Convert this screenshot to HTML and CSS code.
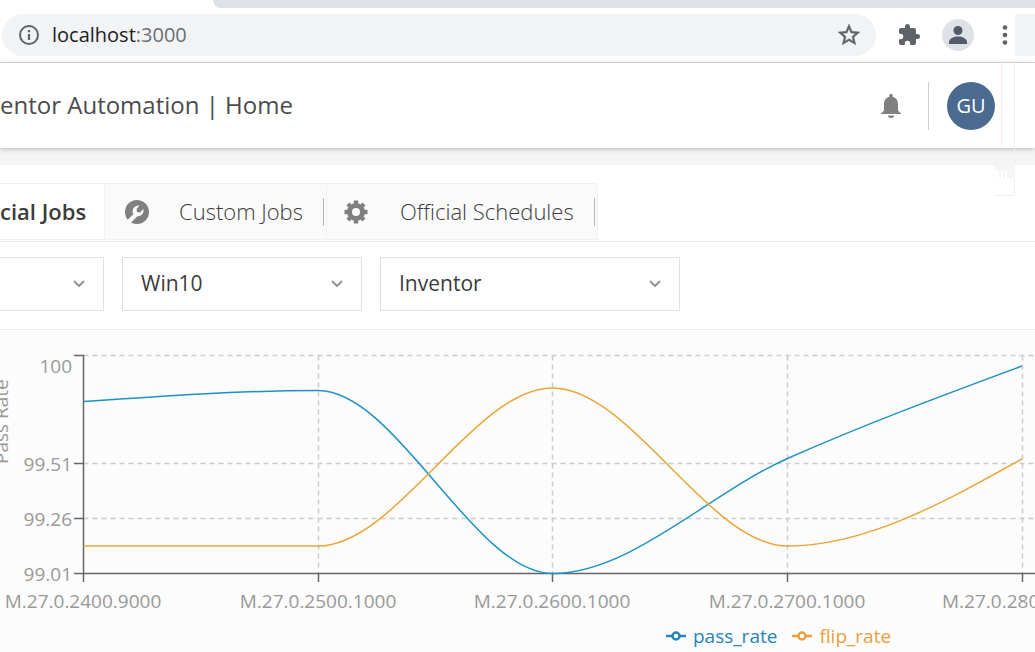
FILE: index.html
```html
<!DOCTYPE html>
<html lang="en">
<head>
<meta charset="utf-8">
<meta name="viewport" content="width=device-width, initial-scale=1">
<title>Inventor Automation | Home</title>
<link rel="stylesheet" href="styles.css">
</head>
<body>
<div class="browser">
  <div class="tab-strip"></div>
  <div class="toolbar">
    <div class="address">
      <svg class="icon-info" viewBox="0 0 22 22" aria-hidden="true"><circle cx="11" cy="11" r="9" fill="none" stroke="#5f6368" stroke-width="2"/><path d="M9.900 10h2.200v6h-2.200zM9.900 6h2.200v2.200h-2.200z" fill="#5f6368"/></svg>
      <div class="url">localhost<span class="port">:3000</span></div>
      <button class="icon-button" aria-label="Bookmark"><svg class="icon-star" viewBox="1 1 22 22"><path fill="#5f6368" stroke="#5f6368" stroke-width=".4" d="M22 9.240l-7.190-.62L12 2 9.190 8.630 2 9.240l5.460 4.730L5.820 21 12 17.270 18.180 21l-1.630-7.030L22 9.240zM12 15.400l-3.760 2.270 1-4.280-3.320-2.880 4.380-.38L12 6.100l1.710 4.040 4.380.38-3.320 2.880 1 4.280L12 15.400z"/></svg></button>
    </div>
    <button class="icon-button" aria-label="Extensions"><svg class="icon-24" viewBox="0 0 24 24"><path fill="#5f6368" d="M20.500 11H19V7a2 2 0 0 0-2-2h-4V3.500a2.500 2.500 0 0 0-5 0V5H4a2 2 0 0 0-2 2v3.800h1.500a2.700 2.700 0 0 1 0 5.400H2V20a2 2 0 0 0 2 2h3.800v-1.500a2.700 2.700 0 0 1 5.400 0V22H17a2 2 0 0 0 2-2v-4h1.500a2.500 2.500 0 0 0 0-5z"/></svg></button>
    <button class="icon-button profile" aria-label="Profile"><svg class="icon-profile" viewBox="0 0 20 20"><circle cx="10" cy="5.500" r="4.500" fill="#525b69"/><path d="M1 19v-2c0-3.500 5-5.500 9-5.500s9 2 9 5.500v2z" fill="#525b69"/></svg></button>
    <button class="icon-button" aria-label="More"><svg class="icon-more" viewBox="0 0 6 20"><g fill="#5f6368"><circle cx="3" cy="2.500" r="2.300"/><circle cx="3" cy="10" r="2.300"/><circle cx="3" cy="17.500" r="2.300"/></g></svg></button>
    <div class="address-end"></div>
  </div>
</div>
<header class="header">
  <h1 class="title">entor Automation | Home</h1>
  <button class="icon-button" aria-label="Notifications"><svg class="icon-bell" viewBox="0 0 20 24"><path fill="#808080" d="M8.300 1.500a1.700 1.700 0 0 1 3.400 0v1.300C15 3.600 17 6.500 17 10v6.500l3 3V20H0v-.5l3-3V10c0-3.500 2-6.400 5.300-7.200zM7 21.500h6a3 2.500 0 0 1-6 0z"/></svg></button>
  <div class="user"><div class="avatar">GU</div></div>
</header>
<div class="band"></div>
<svg class="edge" viewBox="0 0 24 134" aria-hidden="true"><path d="M10.500 0v84" stroke="#fae9e7"/><path d="M23.500 0v133.500H4" fill="none" stroke="#f0f0f0"/><path d="M4 103h20v13h-8v-8h-2v8h-2v-8h-2v8H8v-8H4z" fill="#f6f4f4"/></svg>
<nav class="tabs">
  <button class="tab active">cial Jobs</button>
  <button class="tab custom"><svg class="icon-24" viewBox="0 0 24 24"><circle cx="12" cy="12" r="12" fill="#808080"/><path d="M3 22.500l8-8" stroke="#fafafa" stroke-width="4.500"/><path fill="#fafafa" d="M8 13.500c-1.500-4 1.500-8.500 6.500-8l-3 3.500.5 3 3 .5 3.500-3.500c1 5-4 8.500-8 7z"/></svg><span>Custom Jobs</span></button>
  <button class="tab schedules"><svg class="icon-24" viewBox="0 0 24 24"><circle cx="12" cy="12" r="6.500" fill="none" stroke="#808080" stroke-width="5"/><g stroke="#808080" stroke-width="4.400"><path d="M12 .5v5M12 18.500v5M.5 12h5M18.500 12h5M4 4l3.500 3.500M16.500 16.500L20 20M20 4l-3.500 3.500M7.500 16.500L4 20"/></g></svg><span>Official Schedules</span></button>
</nav>
<div class="filters">
  <div class="field first"><select class="select" aria-label="Filter"><option></option></select><svg class="chevron" viewBox="0 0 12 8"><path d="M1 1l5 5 5-5"/></svg></div>
  <div class="field os"><select class="select" aria-label="Operating system"><option>Win10</option></select><svg class="chevron" viewBox="0 0 12 8"><path d="M1 1l5 5 5-5"/></svg></div>
  <div class="field product"><select class="select" aria-label="Product"><option>Inventor</option></select><svg class="chevron" viewBox="0 0 12 8"><path d="M1 1l5 5 5-5"/></svg></div>
</div>
<main class="chart-panel">
  <svg class="chart" viewBox="0 330 1035 290" role="img" aria-label="Pass rate and flip rate by build">
    <g class="grid"><path d="M83.500 355.500H1035M83.500 463.500H1035M83.500 518.500H1035M318.500 355.500V573M552.500 355.500V573M787.500 355.500V573M1022.500 355.500V573"/></g>
    <path class="axis" d="M74 355.500h9.500V582M74 463.500h9.500M74 518.500h9.500M74 573.500H1035M318.500 573v9M552.500 573v9M787.500 573v9M1022.500 573v9"/>
    <path class="line pass" d="M83.500 401.500C161.700 396 239.800 390.500 318 390.500C396.200 390.500 474.300 573.500 552.500 573.500C630.800 573.500 709.200 493.100 787.500 458.500C865.700 423.900 943.800 395 1022 366"/>
    <path class="line flip" d="M83.500 546H318C396.200 546 474.300 388 552.500 388C630.800 388 709.200 546 787.500 546C865.700 546 943.800 502.500 1022 459"/>
    <g class="label end"><text x="72" y="373">100</text><text x="72" y="471">99.51</text><text x="72" y="526">99.26</text><text x="72" y="581">99.01</text></g>
    <g class="label middle"><text x="83" y="608">M.27.0.2400.9000</text><text x="318" y="608">M.27.0.2500.1000</text><text x="552" y="608">M.27.0.2600.1000</text><text x="787" y="608">M.27.0.2700.1000</text></g>
    <text class="label" x="942" y="608">M.27.0.280</text>
    <text class="label" transform="translate(8 464) rotate(-90)">Pass Rate</text>
  </svg>
  <div class="legend">
    <div class="key pass"><svg class="marker" viewBox="0 0 20 10"><path d="M0 5h6M14 5h6"/><circle cx="10" cy="5" r="3.500"/></svg>pass_rate</div>
    <div class="key flip"><svg class="marker" viewBox="0 0 20 10"><path d="M0 5h6M14 5h6"/><circle cx="10" cy="5" r="3.500"/></svg>flip_rate</div>
  </div>
</main>
</body>
</html>
```
FILE: styles.css
```css
* { box-sizing: border-box; }
body {
  margin: 0;
  min-height: 100vh;
  display: flex;
  flex-direction: column;
  overflow: hidden;
  background: #fff;
  color: #3c3c3c;
  font-family: "Open Sans", "Noto Sans", sans-serif;
}
button, select { font: inherit; color: inherit; }
svg { display: block; flex: none; }
.icon-button { display: flex; align-items: center; justify-content: center; padding: 0; border: 0; background: none; }
.icon-24, .icon-star { width: 24px; height: 24px; }

.browser { border-bottom: 1px solid #d8d9db; }
.tab-strip { height: 8px; margin-left: 213px; background: #dee1e6; border-bottom-left-radius: 10px; }
.toolbar { height: 54px; padding: 0 0 0 2px; display: flex; align-items: center; }
.address { flex: 1; height: 42px; padding: 0 15px 0 16px; display: flex; align-items: center; border-radius: 21px; background: #f1f3f4; }
.icon-info { width: 22px; height: 22px; }
.url { flex: 1; margin-left: 12px; font-size: 20px; line-height: 28px; color: #202124; }
.port { color: #6b6f74; }
.address + .icon-button { margin-left: 21px; }
.profile { width: 32px; height: 32px; margin: 0 28px 0 21px; border-radius: 50%; background: #dee1e6; }
.icon-profile { width: 20px; height: 20px; }
.icon-more { width: 6px; height: 20px; }
.address-end { width: 20px; height: 42px; margin-left: 7px; background: #f1f3f4; }

.header { position: relative; height: 85px; padding-right: 40px; display: flex; align-items: center; background: #fff; box-shadow: 0 1px 5px rgba(0, 0, 0, 0.24); }
.title { flex: 1; margin: 0; padding-bottom: 2px; font-size: 24px; line-height: 32px; font-weight: 400; color: #4c4c4c; }
.icon-bell { width: 20px; height: 24px; }
.user { margin-left: 27px; padding-left: 18px; border-left: 1px solid #ccc; }
.avatar { width: 48px; height: 48px; border-radius: 50%; background: #4a6a8f; color: #fff; font-size: 20px; line-height: 48px; text-align: center; }
.band { height: 17px; background: #f4f4f4; }
.edge { position: absolute; top: 62px; right: 20px; width: 24px; height: 134px; }

.tabs { margin-top: 18px; padding-bottom: 1px; display: flex; border-bottom: 1px solid #ececec; font-size: 22px; line-height: 28px; }
.tab { position: relative; height: 57px; padding: 0; display: flex; align-items: center; border: solid #f1f1f1; border-width: 1px 1px 1px 0; background: #fafafa; font-weight: 300; }
.tab span { padding-bottom: 2px; }
.active { width: 105px; padding-bottom: 2px; background: #fff; font-weight: 600; }
.custom { width: 222px; padding-left: 20px; gap: 30px; }
.schedules { width: 271px; padding-left: 17px; gap: 32px; }
.custom::after, .schedules::after { content: ""; position: absolute; right: 2px; top: 14px; height: 28px; border-right: 1px solid #b8b8b8; }

.filters { padding: 15px 0 18px; display: flex; gap: 18px; border-bottom: 1px solid #ececec; }
.field { position: relative; height: 54px; }
.first { width: 104px; }
.os { width: 240px; }
.product { width: 300px; }
.select { width: 100%; height: 100%; padding: 0 18px 2px; appearance: none; border: 1px solid #e0e0e0; border-radius: 0; background: #fff; font-size: 21px; }
.first .select { border-left: 0; }
.chevron { position: absolute; right: 19px; top: 23px; width: 12px; height: 8px; fill: none; stroke: #949494; stroke-width: 2; pointer-events: none; }

.chart-panel { flex: 1; background: #fcfcfc; }
.chart { width: 100%; height: auto; }
.grid { fill: none; stroke: #ccc; stroke-width: 1.5; stroke-dasharray: 5 4; }
.axis { fill: none; stroke: #666; stroke-width: 1.5; }
.line { fill: none; stroke-width: 1.5; }
.line.pass { stroke: #1f93c0; }
.line.flip { stroke: #eaa535; }
.label { fill: #999; font-size: 19px; }
.end { text-anchor: end; }
.middle { text-anchor: middle; }
.legend { padding-left: 666px; display: flex; gap: 15px; font-size: 19px; line-height: 32px; white-space: nowrap; }
.key { display: flex; align-items: center; gap: 7px; }
.key.pass { color: #2585b8; }
.key.flip { color: #eaa040; }
.marker { width: 20px; height: 10px; fill: none; stroke: currentColor; stroke-width: 2.5; }
```
